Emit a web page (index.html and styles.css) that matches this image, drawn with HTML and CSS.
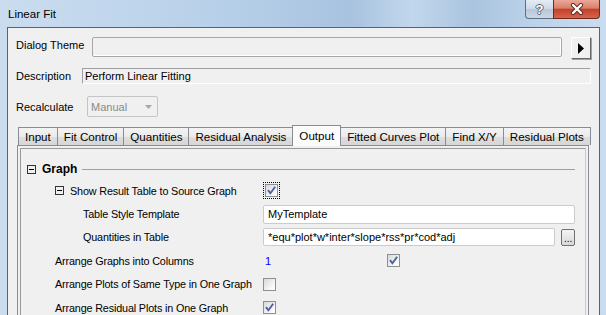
FILE: index.html
```html
<!DOCTYPE html>
<html lang="en">
<head>
    <meta charset="UTF-8">
    <title>Linear Fit</title>
    <link rel="stylesheet" href="styles.css">
</head>
<body>
    <div class="window">
        <div class="titlebar">
            <span class="title">Linear Fit</span>
            <div class="caption-buttons">
                <div class="cap-btn help">?</div>
                <div class="cap-btn close">
                    <svg width="14" height="12" viewBox="0 0 14 12">
                        <path d="M3 2 L11 10 M11 2 L3 10" stroke="#5a2a22" stroke-width="4.2" stroke-linecap="round"/>
                        <path d="M3 2 L11 10 M11 2 L3 10" stroke="#fff" stroke-width="2.4" stroke-linecap="round"/>
                    </svg>
                </div>
            </div>
        </div>

        <div class="client">
            <div class="row theme-row">
                <span class="label theme-label">Dialog Theme</span>
                <div class="theme-field"></div>
                <div class="arrow-btn">
                    <svg width="6" height="11" viewBox="0 0 6 11"><polygon points="0,0 6,5.5 0,11" fill="#000"/></svg>
                </div>
            </div>

            <div class="row desc-row">
                <span class="label desc-label">Description</span>
                <div class="desc-field">Perform Linear Fitting</div>
            </div>

            <div class="row recalc-row">
                <span class="label recalc-label">Recalculate</span>
                <div class="combo">
                    <span>Manual</span>
                    <svg width="7" height="4" viewBox="0 0 7 4"><polygon points="0,0 7,0 3.5,4" fill="#a9a9a9"/></svg>
                </div>
            </div>

            <div class="tabs">
                <div class="tab">Input</div>
                <div class="tab">Fit Control</div>
                <div class="tab">Quantities</div>
                <div class="tab">Residual Analysis</div>
                <div class="tab selected">Output</div>
                <div class="tab">Fitted Curves Plot</div>
                <div class="tab">Find X/Y</div>
                <div class="tab">Residual Plots</div>
            </div>

            <div class="tab-panel">
                <div class="tree">
                    <div class="group-head">
                        <span class="expander"></span>
                        <span class="group-title">Graph</span>
                        <span class="rule"></span>
                    </div>

                    <div class="prop">
                        <div class="prop-label lvl1"><span class="expander"></span>Show Result Table to Source Graph</div>
                        <div class="prop-value"><span class="focus"><span class="check on"><svg width="11" height="11" viewBox="0 0 11 11"><path d="M2 5.2 L4.4 8.3 L9.2 1.8" stroke="#4b61a0" stroke-width="1.9" fill="none"/></svg></span></span></div>
                    </div>

                    <div class="prop">
                        <div class="prop-label lvl2">Table Style Template</div>
                        <div class="prop-value"><div class="text-field wide">MyTemplate</div></div>
                    </div>

                    <div class="prop">
                        <div class="prop-label lvl2">Quantities in Table</div>
                        <div class="prop-value">
                            <div class="text-field narrow">*equ*plot*w*inter*slope*rss*pr*cod*adj</div>
                            <div class="dots-btn">...</div>
                        </div>
                    </div>

                    <div class="prop">
                        <div class="prop-label lvl1">Arrange Graphs into Columns</div>
                        <div class="prop-value">
                            <span class="num">1</span>
                            <span class="check on"><svg width="11" height="11" viewBox="0 0 11 11"><path d="M2 5.2 L4.4 8.3 L9.2 1.8" stroke="#4b61a0" stroke-width="1.9" fill="none"/></svg></span>
                        </div>
                    </div>

                    <div class="prop">
                        <div class="prop-label lvl1">Arrange Plots of Same Type in One Graph</div>
                        <div class="prop-value"><span class="check"></span></div>
                    </div>

                    <div class="prop">
                        <div class="prop-label lvl1">Arrange Residual Plots in One Graph</div>
                        <div class="prop-value"><span class="check on"><svg width="11" height="11" viewBox="0 0 11 11"><path d="M2 5.2 L4.4 8.3 L9.2 1.8" stroke="#4b61a0" stroke-width="1.9" fill="none"/></svg></span></div>
                    </div>
                </div>
            </div>
        </div>
    </div>
</body>
</html>
```

FILE: styles.css
```css
body {
    margin: 0;
    font-family: "Liberation Sans", Arial, sans-serif;
    font-size: 11px;
    color: #000;
}
.window {
    width: 606px;
    height: 315px;
    overflow: hidden;
    display: flex;
    flex-direction: column;
    background: linear-gradient(to right, #cbdcef 0%, #c0d6ec 20%, #b4cde7 42%, #a8c3e0 58%, #c2d7ec 68%, #aac4df 78%, #bcd2ea 88%, #cadcef 100%);
}
.titlebar {
    height: 27px;
    flex: none;
    display: flex;
    align-items: flex-start;
    padding: 0 6px 0 8px;
}
.title {
    font-size: 11.5px;
    line-height: 29px;
    color: #000;
}
.caption-buttons {
    margin-left: auto;
    display: flex;
}
.cap-btn {
    height: 19px;
    box-sizing: border-box;
    border: 1px solid #5e6e84;
    border-top: none;
    display: flex;
    align-items: center;
    justify-content: center;
}
.help {
    width: 28px;
    border-right: none;
    border-radius: 0 0 0 4px;
    background: linear-gradient(#e4ebf3, #cfdae6 48%, #b9c8d9 52%, #c9d7e6);
    font: bold 13px "Liberation Sans", Arial, sans-serif;
    color: #fff;
    text-shadow: -1px 0 #55657a, 1px 0 #55657a, 0 -1px #55657a, 0 1px #55657a;
}
.close {
    width: 47px;
    border-color: #6e2a1e;
    border-radius: 0 0 4px 0;
    background: linear-gradient(#eaa898, #d8806b 45%, #c5412a 52%, #d4654c);
}
.client {
    flex: 1;
    margin: 0 6px 0 7px;
    border: 1px solid #52647a;
    border-bottom: none;
    background: #f0f0f0;
    padding: 9px 8px 0 8px;
}
.row {
    display: flex;
    align-items: center;
}
.theme-row {
    align-items: flex-start;
}
.theme-label {
    width: 76px;
    line-height: 16px;
}
.theme-field {
    width: 470px;
    height: 20px;
    box-sizing: border-box;
    border: 1px solid #a7a7a7;
    border-radius: 2px;
    box-shadow: inset -1px -1px #fff;
    background: #f0f0f0;
}
.arrow-btn {
    width: 20px;
    height: 22px;
    margin-left: 9px;
    box-sizing: border-box;
    border: 1px solid;
    border-color: #fff #6a6a6a #6a6a6a #fff;
    box-shadow: 1px 1px #a0a0a0;
    display: flex;
    align-items: center;
    justify-content: center;
}
.desc-row {
    margin-top: 9px;
}
.desc-label {
    width: 66px;
}
.desc-field {
    flex: 1;
    height: 16px;
    box-sizing: border-box;
    border: 1px solid;
    border-color: #a0a0a0 #fff #fff #a0a0a0;
    line-height: 14px;
    padding-left: 2px;
}
.recalc-row {
    margin-top: 12px;
}
.recalc-label {
    width: 71px;
}
.combo {
    width: 71px;
    height: 21px;
    box-sizing: border-box;
    border: 1px solid #c4c4c4;
    border-radius: 2px;
    color: #8a8a8a;
    display: flex;
    align-items: center;
    justify-content: space-between;
    padding: 0 5px 0 3px;
}
.tabs {
    margin: 8px 0 0 1px;
    padding-left: 1px;
    height: 20px;
    display: flex;
    align-items: flex-end;
}
.tab {
    height: 18px;
    box-sizing: border-box;
    padding: 0 6px;
    margin-right: -1px;
    border: 1px solid #898c95;
    border-bottom: none;
    background: linear-gradient(#f3f3f3, #ebebeb 50%, #dedede 52%, #d6d6d6);
    font-size: 11.6px;
    line-height: 17px;
    white-space: nowrap;
}
.tab.selected {
    height: 21px;
    margin-bottom: -1px;
    position: relative;
    z-index: 1;
    background: #fbfbfb;
    line-height: 19px;
}
.tab-panel {
    margin: 0 2px 0 1px;
    border: 1px solid #898c95;
    padding: 2px;
    height: 200px;
}
.tree {
    border: 1px solid #9a9a9a;
    border-right-color: #c8c8c8;
    height: 100%;
    box-sizing: border-box;
}
.group-head {
    margin-top: 9px;
    height: 21px;
    padding: 1px 10px 0 6px;
    box-sizing: border-box;
    display: flex;
    align-items: center;
}
.expander {
    width: 9px;
    height: 9px;
    box-sizing: border-box;
    border: 1px solid #333;
    position: relative;
    flex: none;
    margin-right: 6px;
}
.expander::after {
    content: "";
    position: absolute;
    left: 1px;
    right: 1px;
    top: 3px;
    height: 1px;
    background: #000;
}
.group-title {
    font-weight: bold;
    font-size: 12px;
}
.rule {
    flex: 1;
    height: 1px;
    margin-left: 5px;
    background: #a0a0a0;
}
.prop {
    display: grid;
    grid-template-columns: 242px 312px;
    height: 23.4px;
    align-items: center;
    font-size: 10.8px;
    letter-spacing: -0.15px;
}
.prop-label {
    display: flex;
    align-items: center;
    white-space: nowrap;
}
.lvl1 {
    padding-left: 34px;
}
.lvl2 {
    padding-left: 62px;
}
.prop-value {
    display: flex;
    align-items: center;
    letter-spacing: 0;
    font-size: 11px;
}
.check {
    width: 13px;
    height: 13px;
    box-sizing: border-box;
    border: 1px solid #8e8f8f;
    background: linear-gradient(135deg, #d8d8d8, #f7f7f7 70%, #fff);
    display: inline-flex;
    align-items: center;
    justify-content: center;
}
.focus {
    display: inline-flex;
    padding: 1px;
    border: 1px dotted #000;
}
.text-field {
    box-sizing: border-box;
    border: 1px solid #cbcbcb;
    border-radius: 2px;
    background: #fff;
    padding-left: 4px;
    white-space: nowrap;
}
.wide {
    width: 312px;
    height: 19px;
    line-height: 17px;
}
.narrow {
    width: 295px;
    height: 18px;
    line-height: 16px;
}
.dots-btn {
    width: 14px;
    height: 17px;
    margin-left: 6px;
    box-sizing: border-box;
    border: 1px solid #707070;
    border-radius: 2px;
    background: linear-gradient(#f4f4f4, #e6e6e6 50%, #d8d8d8);
    font-size: 10px;
    line-height: 18px;
    text-align: center;
}
.num {
    width: 122px;
    padding-left: 2px;
    color: #0000ff;
}
```
